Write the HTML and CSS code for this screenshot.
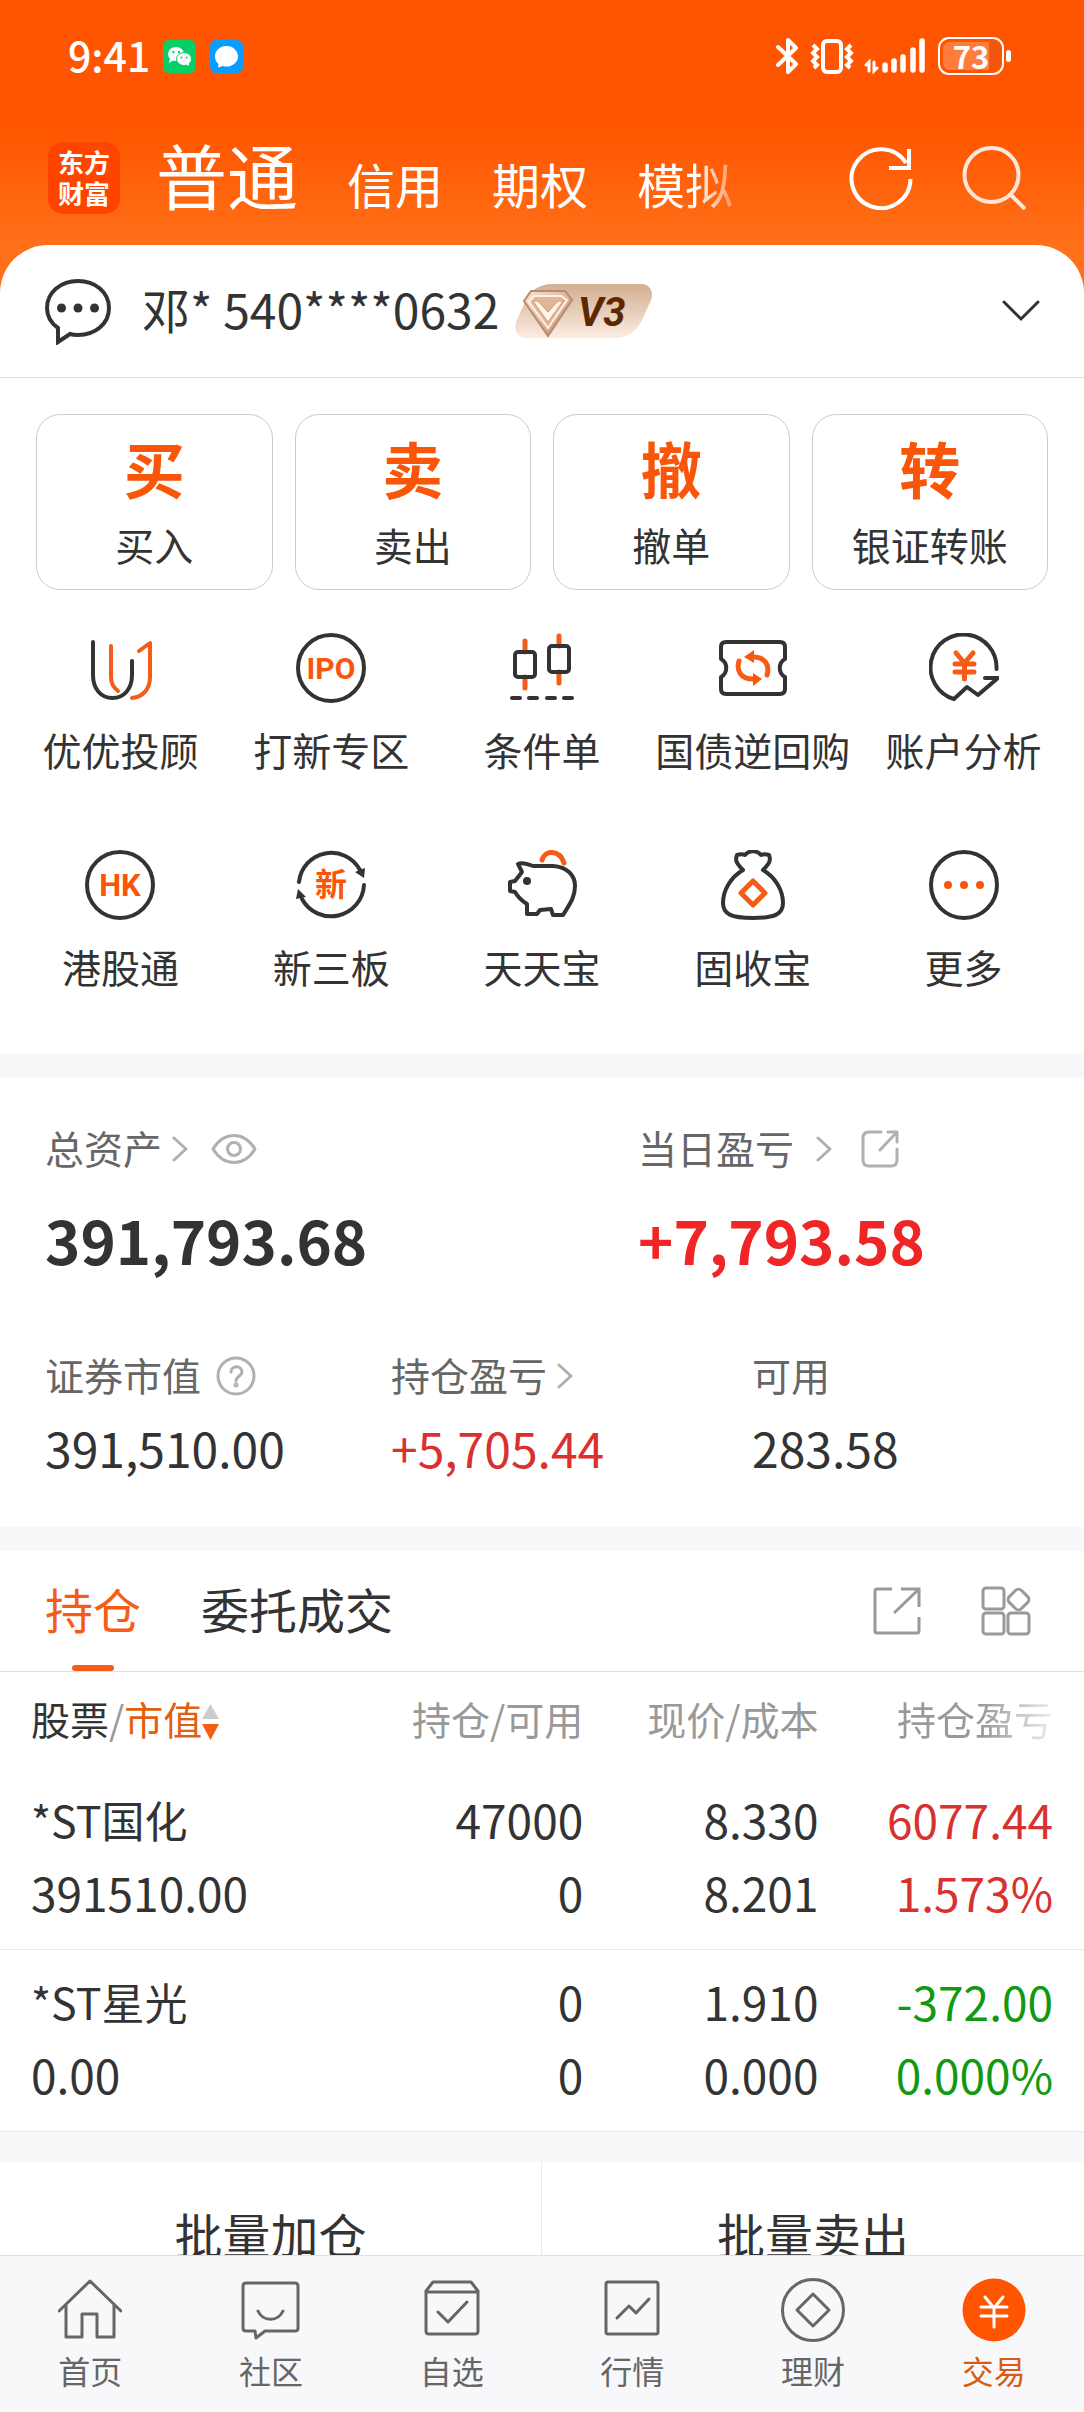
FILE: index.html
```html
<!DOCTYPE html>
<html lang="zh-CN">
<head>
<meta charset="utf-8">
<meta name="viewport" content="width=device-width, initial-scale=1">
<title>交易</title>
<link rel="stylesheet" href="styles.css">
</head>
<body>
<div class="app">
  <main class="scroll">
    <div class="hero">
      <div class="status">
        <div class="status-side">
          <span class="clock">9:41</span>
          <svg class="app-dot" viewBox="0 0 33 33" aria-hidden="true"><rect width="33" height="33" rx="6" fill="#07cf66"/><ellipse cx="13" cy="14" rx="8" ry="7" fill="#fff"/><path d="M7 18l-1 5 5-3z" fill="#fff"/><ellipse cx="21" cy="19" rx="7.500" ry="6.500" fill="#fff" stroke="#07cf66"/><path d="M23 24l3 2v-4z" fill="#fff"/><g fill="#07cf66"><circle cx="10.500" cy="12" r="1.200"/><circle cx="16" cy="12" r="1.200"/><circle cx="18.500" cy="17.500" r="1"/><circle cx="23.500" cy="17.500" r="1"/></g></svg>
          <svg class="app-dot app-dot-gap" viewBox="0 0 33 33" aria-hidden="true"><rect width="33" height="33" rx="6" fill="#0a9dff"/><path d="M16.500 6C10 6 5 10.500 5 16.500c0 3 1.300 5.700 3.500 7.500l-.5 3.500 4.500-1.500c1.200.4 2.600.6 4 .6C23 26.600 28 22 28 16.500S23 6 16.500 6z" fill="#fff"/></svg>
        </div>
        <div class="status-side">
          <svg width="24" height="38" viewBox="0 0 24 38" fill="none" stroke="#fff" stroke-width="4" stroke-linejoin="round" stroke-linecap="round" aria-hidden="true"><path d="M2 10l18 17-8 8V3l8 8L2 28"/></svg>
          <svg class="vibrate" width="44" height="38" viewBox="0 0 44 38" fill="none" stroke="#fff" aria-hidden="true"><rect x="13" y="4" width="18" height="31" rx="4" stroke-width="4"/><path d="M3 8l4 4-4 4 4 4-4 4 4 4-3 3M41 8l-4 4 4 4-4 4 4 4-4 4 3 3" stroke-width="4"/></svg>
          <svg width="62" height="38" viewBox="0 0 62 38" fill="none" stroke="#fff" stroke-linecap="round" aria-hidden="true"><path d="M5 34V25l-3 3M10 25v9l3-3" stroke-width="3"/><path d="M21 28v5M30 24v9M39 20v13M49 13v20M58 4v29" stroke-width="5.500"/></svg>
          <div class="battery"><span class="battery-level">73</span></div>
        </div>
      </div>
      <header class="topbar">
        <div class="logo">东方<br>财富</div>
        <nav class="modes">
          <a class="mode mode-on" href="#">普通</a>
          <a class="mode" href="#">信用</a>
          <a class="mode" href="#">期权</a>
          <a class="mode mode-fade" href="#">模拟</a>
        </nav>
        <button class="icon-btn" aria-label="刷新"><svg width="64" height="64" viewBox="0 0 64 64" fill="none" stroke="#fff" stroke-width="4"><path d="M61.500 33A29.500 29.500 0 1 1 57 17"/><path d="M60 3v19H40"/></svg></button>
        <button class="icon-btn" aria-label="搜索"><svg width="64" height="64" viewBox="0 0 64 64" fill="none" stroke="#ffe6d8" stroke-width="4"><circle cx="29.500" cy="29" r="27"/><path d="M48 48l15 15"/></svg></button>
      </header>
      <button class="account">
        <svg width="68" height="68" viewBox="0 0 68 68" fill="none" stroke="#333" stroke-width="4" aria-hidden="true"><path d="M14 51C6 45.500 3 38 3 31 3 15 17 4 34 4s31 11 31 27-14 27-31 27c-3 0-6-.3-8-1L14 65z"/><g fill="#333" stroke="none"><circle cx="17.500" cy="31" r="4.500"/><circle cx="34" cy="31" r="4.500"/><circle cx="50.500" cy="31" r="4.500"/></g></svg>
        <span class="account-name">邓* 540****0632</span>
        <svg class="badge" width="137" height="54" viewBox="0 0 137 54" aria-hidden="true">
          <defs>
            <linearGradient id="tan" x1="0" y1="0" x2="0" y2="1"><stop offset="0" stop-color="#d2af91"/><stop offset="1" stop-color="#fcece1"/></linearGradient>
            <linearGradient id="gem" x1="0" y1="0" x2="1" y2="1"><stop offset="0" stop-color="#fbe6d8"/><stop offset="1" stop-color="#bd8a6c"/></linearGradient>
          </defs>
          <path d="M38 0h88c9 0 13 8 10 16l-8 18C122 48 112 54 99 54H13C3 54-2 47 1 38l8-18C15 6 24 0 38 0z" fill="url(#tan)"/>
          <path d="M16 7h34l7 9-24 36L9 17z" fill="url(#gem)" stroke="#b98a6e" stroke-width="2"/>
          <path d="M19 12h27l6 4-19 28L14 18z" fill="#e3b597" stroke="#fff0e6" stroke-width="2"/>
          <path d="M23 17l10 11 10-11h5L33 38 18 17z" fill="#fff3ea" stroke="#cf9c7c"/>
          <text class="badge-text" x="63" y="42">V3</text>
        </svg>
        <svg class="account-more" width="38" height="24" viewBox="0 0 38 24" fill="none" stroke="#333" stroke-width="3" stroke-linecap="round" aria-hidden="true"><path d="M2 3l17 17L36 3"/></svg>
      </button>
    </div>

    <section class="cards">
      <button class="card"><b class="card-mark">买</b><span>买入</span></button>
      <button class="card"><b class="card-mark">卖</b><span>卖出</span></button>
      <button class="card"><b class="card-mark">撤</b><span>撤单</span></button>
      <button class="card"><b class="card-mark">转</b><span>银证转账</span></button>
    </section>

    <section class="tools">
      <a class="tool" href="#"><svg viewBox="0 0 70 70"><path class="d" d="M8 9v33c0 14 8 23 19.500 23S47 56 47 42V28"/><path class="o" d="M26 13v31c0 6 3 11 7 14M54 18l11-8v34c0 12-7 20-18 21"/></svg><span>优优投顾</span></a>
      <a class="tool" href="#"><svg viewBox="0 0 70 70"><circle class="d" cx="35" cy="35" r="33"/><text class="t" x="35" y="46" font-size="30">IPO</text></svg><span>打新专区</span></a>
      <a class="tool" href="#"><svg viewBox="0 0 70 70"><path class="o w" d="M18 8v11M18 44v11M52 3v10M52 39v11"/><path class="d" d="M5 65h8M22 65h8M40 65h8M57 65h8"/><rect class="d" x="8" y="19" width="20" height="25" rx="3"/><rect class="d" x="42" y="13" width="20" height="26" rx="3"/></svg><span>条件单</span></a>
      <a class="tool" href="#"><svg viewBox="0 0 70 70"><path class="d" d="M8 9h54q5 0 5 5v12c-7 4-7 14 0 18v12q0 5-5 5H8q-5 0-5-5V44c7-4 7-14 0-18V14q0-5 5-5z"/><path class="o w" d="M35 24c12 0 17 8 14 18M35 46c-12 0-17-8-14-18"/><path class="f" d="M26 24l10-7v13zM44 46l-9-6v13z"/></svg><span>国债逆回购</span></a>
      <a class="tool" href="#"><svg viewBox="0 0 70 70"><path class="d" d="M67.500 36A33 33 0 1 0 25 66l13-12 11 8 20-17H56"/><path class="o w" d="M27 20l8.500 10L44 20M35.500 31v15M26 31h19M26 39h19"/></svg><span>账户分析</span></a>
      <a class="tool" href="#"><svg viewBox="0 0 70 70"><circle class="d" cx="35" cy="35" r="33"/><text class="t" x="35" y="46" font-size="31">HK</text></svg><span>港股通</span></a>
      <a class="tool" href="#"><svg viewBox="0 0 70 70"><path class="d" d="M3 32A32.500 32.500 0 0 1 64 20M68 35A33 33 0 0 1 6 49"/><path d="M59 22l10-4-1 10zM0 49l10-2-8-8z" fill="#333"/><text class="t" x="35" y="46" font-size="32">新</text></svg><span>新三板</span></a>
      <a class="tool" href="#"><svg viewBox="0 0 70 70"><path class="o w" d="M35 10c3-11 18-10 22 3"/><path class="d" d="M11 14c4-2 10 0 15 2h20c14 1 22 9 22 20 0 12-6 19-12 29H46l-2-6-11 1-3 4H20V54c-5-3-9-7-12-12l-5-1v-9l5-1 7-9z"/><circle cx="20" cy="31" r="4" fill="#333"/></svg><span>天天宝</span></a>
      <a class="tool" href="#"><svg viewBox="0 0 70 70"><path class="d" d="M25 20c-7-7-8-10-6-15 3-1 6-1 8 0 4-5 12-5 16 0 2-1 5-1 8 0 2 5 1 8-6 15 12 7 20 20 20 33 0 11-8 15-30 15S5 64 5 53c0-13 8-26 20-33z"/><path class="o w" d="M35 31l12 12-12 12-12-12z"/></svg><span>固收宝</span></a>
      <a class="tool" href="#"><svg viewBox="0 0 70 70"><circle class="d" cx="35" cy="35" r="33"/><g class="f"><circle cx="19" cy="35" r="4"/><circle cx="35" cy="35" r="4"/><circle cx="51" cy="35" r="4"/></g></svg><span>更多</span></a>
    </section>

    <section class="assets">
      <div class="asset-row asset-main">
        <div>
          <div class="label">总资产<svg class="arrow" viewBox="0 0 16 26"><path d="M2 2l12 11L2 24"/></svg>
            <svg class="eye" width="46" height="32" viewBox="0 0 46 32"><path d="M2 16C13-2 33-2 44 16 33 34 13 34 2 16z"/><circle cx="23" cy="16" r="6.500"/></svg></div>
          <div class="total">391,793.68</div>
        </div>
        <div>
          <div class="label">当日盈亏<svg class="arrow arrow-far" viewBox="0 0 16 26"><path d="M2 2l12 11L2 24"/></svg>
            <svg class="share" width="38" height="38" viewBox="0 0 38 38"><path d="M20 2H8q-6 0-6 6v22q0 6 6 6h22q6 0 6-6V19M27 2h9v10M36 2L19 20"/></svg></div>
          <div class="total up-strong">+7,793.58</div>
        </div>
      </div>
      <div class="asset-row asset-sub">
        <div>
          <div class="label">证券市值<svg class="help" width="40" height="40" viewBox="0 0 40 40"><circle cx="20" cy="20" r="18"/><path d="M15 16c0-7 11-7 11 0 0 4-6 4-6 9"/><circle cx="20" cy="29" r="1"/></svg></div>
          <div class="amount">391,510.00</div>
        </div>
        <div>
          <div class="label">持仓盈亏<svg class="arrow" viewBox="0 0 16 26"><path d="M2 2l12 11L2 24"/></svg></div>
          <div class="amount up">+5,705.44</div>
        </div>
        <div>
          <div class="label">可用</div>
          <div class="amount">283.58</div>
        </div>
      </div>
    </section>

    <section class="holdings">
      <div class="tabs">
        <button class="tab tab-on">持仓</button>
        <button class="tab">委托成交</button>
        <button class="icon-btn tabs-end" aria-label="分享"><svg width="48" height="48" viewBox="0 0 48 48" fill="none" stroke="#999" stroke-width="3"><path d="M19 2H4q-2 0-2 2v40q0 2 2 2h40q2 0 2-2V30M28 2h18v18M46 2L21 26"/></svg></button>
        <button class="icon-btn" aria-label="管理"><svg width="50" height="50" viewBox="0 0 50 50" fill="none" stroke="#999" stroke-width="3"><rect x="2" y="2" width="21" height="21" rx="3"/><rect x="2" y="27" width="21" height="21" rx="3"/><rect x="27" y="27" width="21" height="21" rx="3"/><rect x="29" y="5" width="17" height="17" rx="4" transform="rotate(45 37.500 13.500)"/></svg></button>
      </div>
      <table class="stocks">
        <thead>
          <tr>
            <th class="c-name"><span class="dark">股票</span>/<span class="hot">市值</span><svg width="17" height="36" viewBox="0 0 17 36" aria-hidden="true"><path d="M8.500 0L17 15H0z" fill="#ccc"/><path d="M8.500 36L0 20h17z" fill="#f55d16"/></svg></th>
            <th class="c-num">持仓/可用</th>
            <th class="c-num">现价/成本</th>
            <th class="c-last"><span class="fade">持仓盈亏</span></th>
          </tr>
        </thead>
        <tbody>
          <tr>
            <td><span class="stock">*ST国化</span><br>391510.00</td>
            <td>47000<br>0</td>
            <td>8.330<br>8.201</td>
            <td class="up">6077.44<br>1.573%</td>
          </tr>
          <tr>
            <td><span class="stock">*ST星光</span><br>0.00</td>
            <td>0<br>0</td>
            <td>1.910<br>0.000</td>
            <td class="down">-372.00<br>0.000%</td>
          </tr>
        </tbody>
      </table>
    </section>

    <div class="batch">
      <button class="batch-btn">批量加仓</button>
      <button class="batch-btn">批量卖出</button>
    </div>
  </main>

  <nav class="dock">
    <a class="dock-item" href="#"><svg viewBox="0 0 64 64"><path d="M1 33L32 3l31 30M8 27v32h16V36h15v23h17V27"/></svg>首页</a>
    <a class="dock-item" href="#"><svg viewBox="0 0 64 64"><path d="M7 5h49q3 0 3 3v42q0 3-3 3H26l-9 7-1-7H7q-3 0-3-3V8q0-3 3-3zM19 33c5 11 20 11 25 0"/></svg>社区</a>
    <a class="dock-item" href="#"><svg viewBox="0 0 64 64"><path d="M13 4h38l7 9v40q0 3-3 3H9q-3 0-3-3V13zM6 14h52M18 34l10 10 19-20"/></svg>自选</a>
    <a class="dock-item" href="#"><svg viewBox="0 0 64 64"><rect x="6" y="4" width="52" height="52" rx="2"/><path d="M17 40l12-12 7 7 13-14"/></svg>行情</a>
    <a class="dock-item" href="#"><svg viewBox="0 0 64 64"><circle cx="32" cy="32" r="30.500"/><path d="M32 16l16 16-16 16-16-16z"/></svg>理财</a>
    <a class="dock-item dock-on" href="#"><svg viewBox="0 0 64 64"><circle cx="32" cy="32" r="31.500" fill="#ff5500" stroke="none"/><path d="M23 19l9 11 9-11M32 30v19M19 29h26M19 38h26" stroke="#fff"/></svg>交易</a>
  </nav>
</div>
</body>
</html>
```
FILE: styles.css
```css
* { box-sizing: border-box; }

body {
  margin: 0;
  color: #333;
  background: #fff;
  font-family: "Noto Sans CJK SC", "Noto Sans", sans-serif;
}

button {
  margin: 0;
  padding: 0;
  border: 0;
  background: none;
  color: inherit;
  font: inherit;
}

a { color: inherit; text-decoration: none; }
svg { display: block; flex: none; }

.app { display: flex; flex-direction: column; height: 100vh; }
.scroll { flex: 1; min-height: 0; overflow-y: auto; scrollbar-width: none; }

/* Orange top area */
.hero { background: linear-gradient(#ff5500 125px, #ff7019 245px, #ff7019); }

.status {
  display: flex;
  justify-content: space-between;
  align-items: center;
  height: 112px;
  padding: 0 80px 0 68px;
  color: #fff;
}
.status-side { display: flex; align-items: center; }
.clock { margin-right: 13px; font-size: 41px; line-height: 46px; padding-bottom: 4px; font-weight: 500; }
.app-dot { width: 33px; height: 33px; }
.app-dot-gap { margin-left: 14px; }
.vibrate { margin: 0 10px; }
.battery {
  position: relative;
  width: 66px;
  height: 38px;
  margin-left: 12px;
  padding: 3px;
  border: 2px solid #fff;
  border-radius: 11px;
}
.battery::after {
  content: "";
  position: absolute;
  top: 11px;
  right: -9px;
  width: 5px;
  height: 12px;
  border-radius: 3px;
  background: #fff;
}
.battery-level {
  display: block;
  border-radius: 7px;
  background: linear-gradient(90deg, #ff7c3d 82%, #f0560e 82%);
  font-size: 31px;
  line-height: 28px;
  font-weight: 700;
  text-align: center;
}

.topbar { display: flex; align-items: center; gap: 49px; height: 133px; padding: 0 58px 2px 48px; }
.logo {
  width: 72px;
  height: 72px;
  padding-top: 4px;
  border-radius: 15px;
  background: #ff4400;
  color: #fff;
  font-size: 26px;
  line-height: 31px;
  font-weight: 700;
  text-align: center;
}
.modes { display: flex; flex: 1; align-items: baseline; gap: 49px; margin-left: -13px; color: #fff; }
.mode { font-size: 48px; line-height: 100px; }
.mode-on { font-size: 71px; }
.mode-fade {
  background: linear-gradient(90deg, #fff 60%, #ff9a5c);
  background-clip: text;
  color: transparent;
}
.icon-btn { display: flex; }

.account {
  display: flex;
  align-items: center;
  width: 100%;
  height: 133px;
  padding: 0 44px;
  border-bottom: 1px solid #e0e0e0;
  border-radius: 48px 48px 0 0;
  background: #fff;
}
.account-name { margin: 0 16px 0 30px; padding-bottom: 6px; font-size: 48px; line-height: 64px; }
.badge-text { fill: #5c2803; font: italic 700 40px Roboto, sans-serif; }
.account-more { margin-left: auto; }

/* Trade cards */
.cards { display: grid; grid-template-columns: repeat(4, 1fr); gap: 22px; padding: 36px 36px 0; }
.card {
  display: flex;
  flex-direction: column;
  align-items: center;
  height: 176px;
  padding-top: 17px;
  border: 1px solid #ccc;
  border-radius: 24px;
  font-size: 39px;
  line-height: 60px;
}
.card-mark { margin-bottom: 10px; color: #fa560a; font-size: 61px; line-height: 72px; }

/* Tool grid */
.tools { display: grid; grid-template-columns: repeat(5, 1fr); row-gap: 70px; padding: 43px 15px 57px; }
.tool {
  display: flex;
  flex-direction: column;
  align-items: center;
  gap: 15px;
  font-size: 39px;
  line-height: 62px;
  white-space: nowrap;
}
.tool svg { width: 70px; height: 70px; }
.d, .o { fill: none; stroke-width: 4; stroke-linecap: round; stroke-linejoin: round; }
.d { stroke: #333; }
.o { stroke: #f55d16; }
.w { stroke-width: 5; }
.f { fill: #fa560a; }
.t { fill: #fa560a; font-family: Roboto, "Noto Sans CJK SC", sans-serif; font-weight: 700; text-anchor: middle; }

/* Assets */
.assets {
  padding: 39px 0 49px 45px;
  border-top: 24px solid #f7f8fa;
  border-bottom: 24px solid #f7f8fa;
}
.asset-row { display: grid; }
.asset-main { grid-template-columns: 593fr 446fr; margin-bottom: 68px; }
.asset-sub { grid-template-columns: 346fr 361fr 332fr; }
.label { display: flex; align-items: center; color: #666; font-size: 39px; line-height: 60px; }
.label svg { margin-top: 4px; fill: none; stroke: #b0b0b0; stroke-width: 3; stroke-linecap: round; stroke-linejoin: round; }
.arrow { width: 16px; height: 26px; margin-left: 10px; }
.arrow-far { margin-left: 22px; }
.eye { margin-left: 23px; }
.share { margin-left: 29px; }
.help { margin-left: 15px; }
.total { margin-top: 25px; font-size: 60px; line-height: 74px; font-weight: 700; }
.amount { margin-top: 13px; font-size: 48px; line-height: 61px; }
.up { color: #d93030; }
.up-strong { color: #f02525; }
.down { color: #119911; }

/* Holdings */
.tabs {
  display: flex;
  align-items: center;
  gap: 60px;
  height: 121px;
  padding: 0 53px 0 45px;
  border-bottom: 1px solid #e0e0e0;
}
.tab { position: relative; height: 120px; padding-bottom: 6px; font-size: 48px; line-height: 114px; }
.tab-on { color: #f55d16; }
.tab-on::after {
  content: "";
  position: absolute;
  bottom: 0;
  left: 50%;
  width: 42px;
  height: 6px;
  margin-left: -21px;
  border-radius: 3px;
  background: #f55d16;
}
.tabs-end { margin-left: auto; }

.stocks { width: 100%; border-collapse: separate; border-spacing: 0; table-layout: fixed; font-size: 46px; line-height: 73px; }
.stocks th { height: 96px; padding: 0 0 4px; color: #999; font-size: 39px; line-height: 60px; font-weight: 400; text-align: right; white-space: nowrap; }
.stocks td { padding: 14px 0 20px; border-bottom: 1px solid #eaeaea; text-align: right; }
.stocks th:first-child, .stocks td:first-child { padding-left: 31px; text-align: left; }
.stocks th:last-child, .stocks td:last-child { padding-right: 31px; }
.c-num { width: 21.7%; }
.c-last { width: 24.5%; }
.c-name svg { display: inline-block; vertical-align: -5px; }
.dark { color: #333; }
.hot { color: #e0600f; }
.stock { font-size: 43px; }
.fade { background: linear-gradient(90deg, #999 55%, #eee); background-clip: text; color: transparent; }

/* Batch actions */
.batch { display: grid; grid-template-columns: 1fr 1fr; border-top: 30px solid #f7f8fa; }
.batch-btn { height: 142px; font-size: 48px; line-height: 142px; }
.batch-btn:first-child { border-right: 1px solid #eaeaea; }

/* Bottom navigation */
.dock { display: grid; grid-template-columns: repeat(6, 1fr); height: 157px; border-top: 1px solid #e0e0e0; background: #f8f8fa; }
.dock-item {
  display: flex;
  flex-direction: column;
  align-items: center;
  gap: 4px;
  padding-top: 22px;
  color: #666;
  font-size: 32px;
  line-height: 48px;
}
.dock-item svg { width: 64px; height: 64px; fill: none; stroke: #666; stroke-width: 3; stroke-linejoin: round; stroke-linecap: round; }
.dock-on { color: #d95b15; }
```
